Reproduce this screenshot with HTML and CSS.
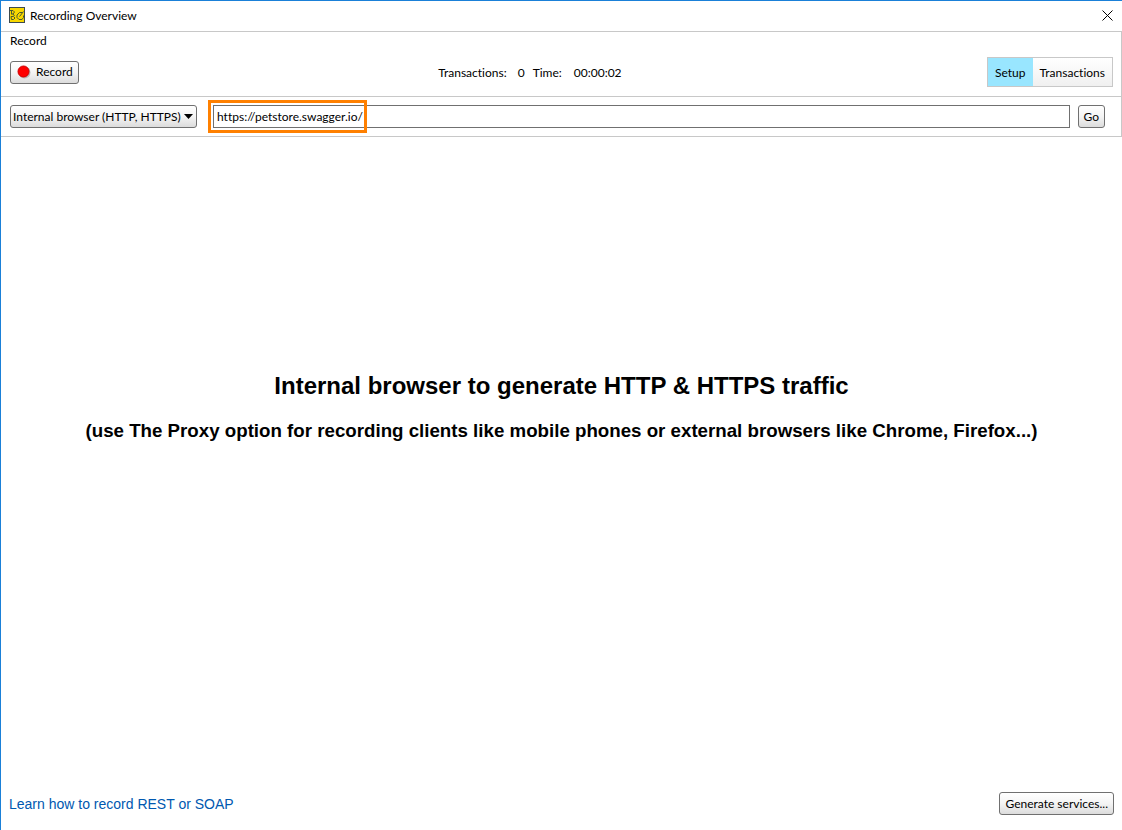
FILE: index.html
```
<!DOCTYPE html>
<html lang="en">
<head>
  <meta charset="utf-8">
  <title>Recording Overview</title>
  <link rel="stylesheet" href="styles.css">
</head>
<body>
  <div class="window">
    <header class="titlebar">
      <svg class="app-icon" width="16" height="16" viewBox="0 0 16 16">
        <rect x="0.5" y="0.5" width="15" height="15" fill="#f7d700" stroke="#3c4a50"/>
        <g fill="none" stroke="#4a5a30">
          <path d="M1 3.500h3l1.500 1.500-1.500 2H2M2.500 3.500v3.500M4 7l1.500 2M2 9.500h2.500l1.500 1.500-1.500 1.500H2.500z"/>
          <path d="M13.500 5.500h-3L8 8v2.500l2 2h3l1.500-2V8.500M14.500 4.500L10.500 9.500"/>
        </g>
      </svg>
      <span class="title">Recording Overview</span>
      <button class="close" aria-label="Close">
        <svg width="11" height="11" viewBox="0 0 11 11">
          <path d="M0.500 0.500L10.500 10.500M10.500 0.500L0.500 10.500" fill="none" stroke="#000"/>
        </svg>
      </button>
    </header>

    <div class="panel">
      <div class="record-section">
        <div class="section-label">Record</div>
        <div class="record-row">
          <button class="btn btn-record">
            <svg width="15" height="14" viewBox="0 0 15 14">
              <circle cx="7.500" cy="7.500" r="6" fill="#bbb"/>
              <circle cx="6.500" cy="6.500" r="5.500" fill="#f00" stroke="#d00000"/>
            </svg>
            Record
          </button>
          <div class="status">
            <span>Transactions:</span>
            <span class="count">0</span>
            <span>Time:</span>
            <span class="time">00:00:02</span>
          </div>
          <div class="tabs">
            <button class="tab active">Setup</button>
            <button class="tab">Transactions</button>
          </div>
        </div>
      </div>
      <div class="address-row">
        <div class="source">
          <select class="source-select" aria-label="Recording source">
            <option>Internal browser (HTTP, HTTPS)</option>
            <option>Proxy</option>
          </select>
          <svg class="arrow" width="9" height="5" viewBox="0 0 9 5"><path d="M0 0h9L4.500 5z"/></svg>
        </div>
        <div class="address">
          <input class="url" type="text" value="https://petstore.swagger.io/" aria-label="URL">
          <div class="highlight"></div>
        </div>
        <button class="btn">Go</button>
      </div>
    </div>

    <main class="message">
      <h2>Internal browser to generate HTTP &amp; HTTPS traffic</h2>
      <h3>(use The Proxy option for recording clients like mobile phones or external browsers like Chrome, Firefox...)</h3>
    </main>

    <footer class="footer">
      <a href="#">Learn how to record REST or SOAP</a>
      <button class="btn">Generate services...</button>
    </footer>
  </div>
</body>
</html>
```
FILE: styles.css
```
* {
  box-sizing: border-box;
}
body {
  margin: 0;
  color: #000;
  background-color: #fff;
  font: 12px/16px Lato, "Open Sans", sans-serif;
  font-variant-ligatures: none;
}
button, select, input {
  font: inherit;
  font-variant-ligatures: none;
  color: inherit;
}
.window {
  display: flex;
  flex-direction: column;
  min-height: 100vh;
  border-top: 1px solid #1a80d8;
  border-left: 1px solid #1a80d8;
}
.titlebar {
  display: flex;
  align-items: center;
  height: 30px;
  padding: 0 9px 2px 8px;
}
.title {
  margin-left: 5px;
  padding-top: 2px;
}
.close {
  display: flex;
  margin-left: auto;
  padding: 0;
  border: none;
  background: none;
}
.panel {
  border: 1px solid #c8c8c8;
  border-left: none;
}
.record-section {
  padding: 1px 8px 9px 9px;
  border-bottom: 1px solid #c8c8c8;
}
.record-row {
  display: flex;
  align-items: center;
  justify-content: space-between;
  margin-top: 8px;
}
.btn {
  display: flex;
  align-items: center;
  height: 23px;
  padding: 0 5px;
  border: 1px solid #707070;
  border-radius: 3px;
  background: linear-gradient(to bottom, #fff, #f4f4f4 50%, #dcdcdc);
}
.btn-record {
  gap: 4px;
  padding-left: 6px;
}
.status {
  display: flex;
  gap: 8px;
  padding: 2px 6px 0 0;
}
.count {
  margin-left: 3px;
}
.time {
  margin-left: 4px;
}
.tabs {
  display: flex;
  border: 1px solid #c8c8c8;
}
.tab {
  height: 28px;
  padding: 2px 7px 0;
  border: none;
  background: linear-gradient(to bottom, #fff, #f0f0f0);
}
.tab.active {
  background: #99e6ff;
}
.address-row {
  display: flex;
  align-items: center;
  padding: 8px 16px 8px 9px;
}
.source {
  position: relative;
}
.source-select {
  display: block;
  width: 187px;
  height: 23px;
  padding: 0 2px;
  border: 1px solid #707070;
  border-radius: 3px;
  appearance: none;
  background: linear-gradient(to bottom, #fff, #f4f4f4 50%, #dcdcdc);
}
.arrow {
  position: absolute;
  top: 9px;
  right: 4px;
  pointer-events: none;
}
.address {
  position: relative;
  flex: 1;
  margin: 0 8px 0 16px;
}
.url {
  display: block;
  width: 100%;
  height: 23px;
  padding: 0 3px;
  border: 1px solid #707070;
  background-color: #fff;
}
.highlight {
  position: absolute;
  top: -5px;
  left: -5px;
  width: 159px;
  height: 33px;
  border: 3px solid #ff8000;
  pointer-events: none;
}
.message {
  flex: 1;
  display: flex;
  flex-direction: column;
  justify-content: center;
  padding: 0 16px 116px;
  font-family: "Liberation Sans", Arial, sans-serif;
  font-size: 16px;
  text-align: center;
}
.message h2 {
  margin: 0 0 20px;
  line-height: 28px;
}
.message h3 {
  margin: 0;
  line-height: 22px;
}
.footer {
  display: flex;
  align-items: center;
  justify-content: space-between;
  padding: 0 8px 15px;
}
.footer a {
  color: #0058b0;
  font: 14px/16px "Liberation Sans", Arial, sans-serif;
  text-decoration: none;
}
```
